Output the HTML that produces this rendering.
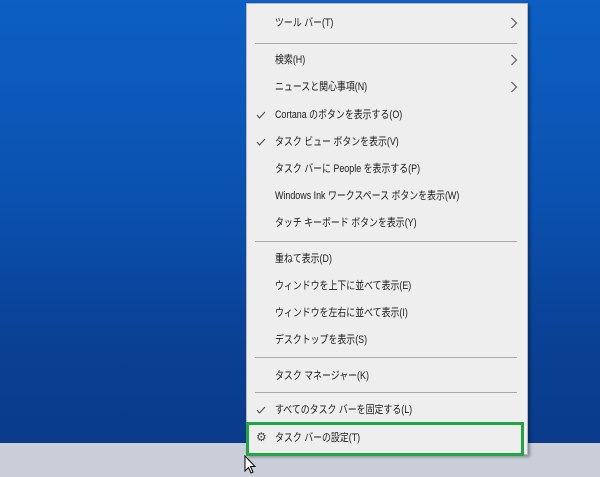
<!DOCTYPE html>
<html><head><meta charset="utf-8"><style>
body{margin:0;width:600px;height:477px;overflow:hidden;position:relative;font-family:"Liberation Sans","Noto Sans CJK JP",sans-serif;
background:linear-gradient(180deg,#0d5fc4 0%,#0b52b0 40%,#0a3f92 75%,#0a3a88 100%);}
.tb{position:absolute;left:0;top:443px;width:600px;height:34px;background:#c9ced9}
.menu{position:absolute;left:246px;top:3px;width:280px;height:450px;background:#eeeeee;border:1px solid #b8b8b8;box-shadow:2px 2px 3px rgba(0,0,0,.35)}
.it{position:absolute;left:28px;font-size:11px;color:#1a1a1a;white-space:nowrap;line-height:14px;transform:scaleX(.81);transform-origin:left center}
.ck{position:absolute;left:9px}
.ar{position:absolute;left:263px}
.sep{position:absolute;left:8px;width:262px;height:1px;background:#a8a8a8}
.hl{position:absolute;left:-1px;top:418px;width:272px;height:28px;border:3px solid #22a447}
</style></head><body>
<div class="tb"></div>
<div class="menu">
<div class="it" style="top:12px">ツール バー(T)</div><svg class="ar" style="top:13px" width="8" height="12"><path d="M1.5 1 L6.5 6 L1.5 11" fill="none" stroke="#555" stroke-width="1.1"/></svg>
<div class="sep" style="top:39px"></div>
<div class="it" style="top:49px">検索(H)</div><svg class="ar" style="top:50px" width="8" height="12"><path d="M1.5 1 L6.5 6 L1.5 11" fill="none" stroke="#555" stroke-width="1.1"/></svg>
<div class="it" style="top:76px">ニュースと関心事項(N)</div><svg class="ar" style="top:77px" width="8" height="12"><path d="M1.5 1 L6.5 6 L1.5 11" fill="none" stroke="#555" stroke-width="1.1"/></svg>
<svg class="ck" style="top:107px" width="10" height="8"><path d="M1 4 L3.5 7 L9 1" fill="none" stroke="#444" stroke-width="1"/></svg><div class="it" style="top:104px">Cortana のボタンを表示する(O)</div>
<svg class="ck" style="top:134px" width="10" height="8"><path d="M1 4 L3.5 7 L9 1" fill="none" stroke="#444" stroke-width="1"/></svg><div class="it" style="top:131px">タスク ビュー ボタンを表示(V)</div>
<div class="it" style="top:158px">タスク バーに People を表示する(P)</div>
<div class="it" style="top:185px">Windows Ink ワークスペース ボタンを表示(W)</div>
<div class="it" style="top:212px">タッチ キーボード ボタンを表示(Y)</div>
<div class="sep" style="top:237px"></div>
<div class="it" style="top:248px">重ねて表示(D)</div>
<div class="it" style="top:275px">ウィンドウを上下に並べて表示(E)</div>
<div class="it" style="top:302px">ウィンドウを左右に並べて表示(I)</div>
<div class="it" style="top:329px">デスクトップを表示(S)</div>
<div class="sep" style="top:353px"></div>
<div class="it" style="top:365px">タスク マネージャー(K)</div>
<div class="sep" style="top:388px"></div>
<svg class="ck" style="top:402px" width="10" height="8"><path d="M1 4 L3.5 7 L9 1" fill="none" stroke="#444" stroke-width="1"/></svg><div class="it" style="top:399px">すべてのタスク バーを固定する(L)</div>
<div class="hl"></div>
<div style="position:absolute;left:9px;top:426px;font-size:12px;color:#444">⚙</div><div class="it" style="top:427px">タスク バーの設定(T)</div>
</div>
<svg style="position:absolute;left:244px;top:455px" width="12" height="20" viewBox="0 0 12 20"><path d="M1 1 L1 16 L4.5 12.5 L7 18 L9 17 L6.5 11.5 L11 11.5 Z" fill="#fff" stroke="#000" stroke-width="1"/></svg>
</body></html>
